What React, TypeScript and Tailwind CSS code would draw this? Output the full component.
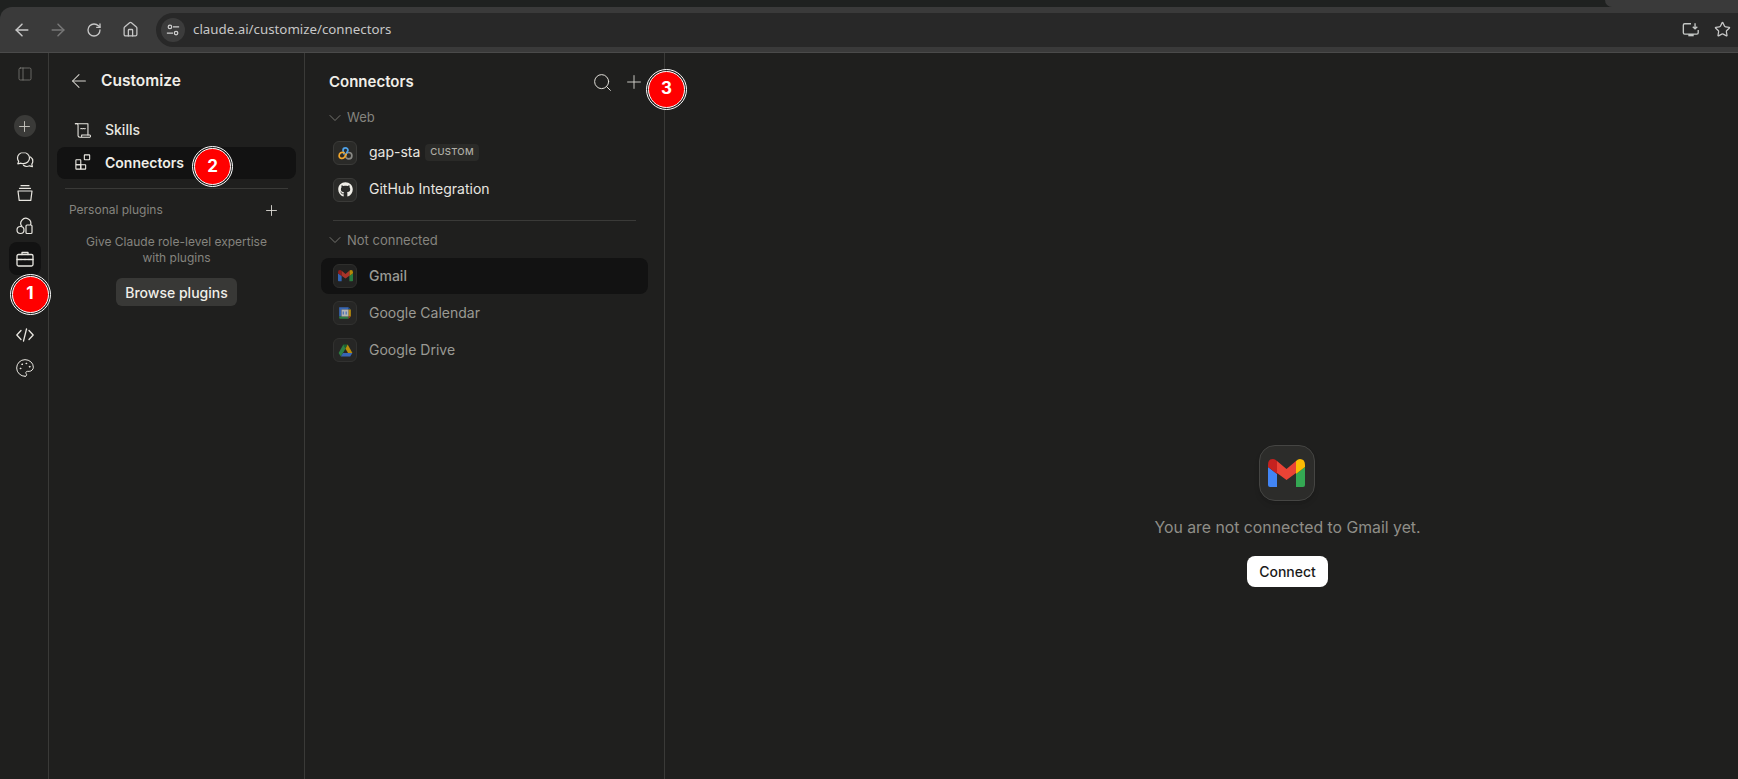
import { ArrowLeft, ArrowRight, ChevronDown, Home, Palette, PanelLeft, Plus, RotateCw, Search, Star } from "lucide-react";
import { FaGithub } from "react-icons/fa";
import type { ReactNode } from "react";

const appFont = "font-['Inter','Noto_Sans',sans-serif]";

function GmailIcon({ width }: { width: number }) {
  return (
    <svg width={width} height={(width * 28) / 37} viewBox="0 0 37 28" fill="none">
      <path d="M0 8L9 15V28H2Q0 28 0 26Z" fill="#4285f4" />
      <path d="M37 8L28 15V28H35Q37 28 37 26Z" fill="#34a853" />
      <path d="M0 6Q0 0 5 0Q7 0 9 2V15L0 8Z" fill="#c5221f" />
      <path d="M37 6Q37 0 32 0Q30 0 28 2V15L37 8Z" fill="#fbbc04" />
      <path d="M9 2L18.500 10L28 2V14L18.500 21L9 14Z" fill="#ea4335" />
    </svg>
  );
}

function CalendarIcon() {
  return (
    <svg width="14" height="14" viewBox="0 0 24 24">
      <path d="M2 2H18V6H6V18H2Z" fill="#4285f4" />
      <path d="M18 2L22 6H18Z" fill="#1967d2" />
      <path d="M18 6H22V18H18Z" fill="#fbbc04" />
      <path d="M2 18H18V22H4C3 22 2 21 2 20Z" fill="#34a853" />
      <path d="M18 18H22L18 22Z" fill="#ea4335" />
      <rect x="6" y="6" width="12" height="12" fill="#f4f4f4" />
      <path d="M9 9.500V14.500M14 9.500V14.500" stroke="#4285f4" strokeWidth="1.800" />
    </svg>
  );
}

function DriveIcon() {
  return (
    <svg width="15" height="15" viewBox="0 0 24 24">
      <path d="M8.500 2.500H15.500L12 9Z" fill="#188038" />
      <path d="M8.500 2.500L1 16L4.500 21.500L12 9Z" fill="#34a853" />
      <path d="M15.500 2.500L23 16H16L12 9Z" fill="#fbbc04" />
      <path d="M8 16H23L19.500 21.500H4.500Z" fill="#4285f4" />
    </svg>
  );
}

function LinkIcon() {
  return (
    <svg width="17" height="17" viewBox="0 0 24 24" fill="none" strokeWidth="2.400">
      <circle cx="16.500" cy="16.500" r="4.500" stroke="#8a8a86" />
      <path d="M10 14L8.500 9A3.500 3.500 0 1 1 15.500 9L13 14" stroke="#4ea1e8" strokeLinecap="round" />
      <path d="M10 12.500C6.500 10.500 3 13 3 16.500C3 20.500 8.500 22 11 18L13 14.500" stroke="#f0a62e" strokeLinecap="round" />
    </svg>
  );
}

function ChatsIcon() {
  return (
    <svg width="20" height="20" viewBox="0 0 20 20" fill="none" stroke="currentColor" strokeWidth="1.200" strokeLinecap="round" strokeLinejoin="round">
      <path d="M8.500 2.500C5 2.500 2.500 5 2.500 8C2.500 9.300 3 10.500 3.700 11.400L2.800 13.800L6 13.200C6.800 13.500 7.600 13.700 8.500 13.700C11.800 13.700 14.500 11.200 14.500 8C14.500 5 11.800 2.500 8.500 2.500Z" />
      <path d="M15.500 7C17 8 17.800 9.500 17.800 11.200C17.800 12.300 17.400 13.300 16.800 14.200L17.400 16.600L14.500 15.800C12.500 16.800 10 16.500 8.500 15.200" />
    </svg>
  );
}

function StackIcon() {
  return (
    <svg width="20" height="20" viewBox="0 0 20 20" fill="none" stroke="currentColor" strokeWidth="1.200" strokeLinecap="round" strokeLinejoin="round">
      <path d="M6 2.700H14" />
      <path d="M4.500 5.300H15.500" />
      <path d="M3 8H17L15.800 17.300H4.200Z" />
    </svg>
  );
}

function ShapesIcon() {
  return (
    <svg width="20" height="20" viewBox="0 0 20 20" fill="none" stroke="currentColor" strokeWidth="1.200" strokeLinejoin="round">
      <circle cx="5.500" cy="14" r="3.500" />
      <rect x="11" y="9" width="6" height="8.500" rx="1" />
      <path d="M7 10.500A5 5 0 1 1 15.500 9" />
    </svg>
  );
}

function BriefcaseIcon() {
  return (
    <svg width="20" height="20" viewBox="0 0 20 20" fill="none" stroke="currentColor" strokeWidth="1.300" strokeLinecap="round" strokeLinejoin="round">
      <rect x="2" y="5.500" width="16" height="11.500" rx="1.500" />
      <path d="M7 5.500V3.500H13V5.500" />
      <path d="M2 10.500H7.500M12.500 10.500H18M8.500 10.500H11.500" />
    </svg>
  );
}

function CodeIcon() {
  return (
    <svg width="20" height="20" viewBox="0 0 20 20" fill="none" stroke="currentColor" strokeWidth="1.300" strokeLinecap="round" strokeLinejoin="round">
      <path d="M6 5.500L1.800 10L6 14.500" />
      <path d="M14 5.500L18.200 10L14 14.500" />
      <path d="M11.500 4L8.500 16" />
    </svg>
  );
}

function ScrollIcon() {
  return (
    <svg width="18" height="18" viewBox="0 0 20 20" fill="none" stroke="currentColor" strokeWidth="1.200" strokeLinecap="round" strokeLinejoin="round">
      <path d="M1.500 3C3.500 2.500 4.500 3 4.500 5V16.500C4.500 17.500 5.500 18 6.500 18H17.500C18.500 18 18.800 16.200 17.500 15.500H8.500V17" />
      <path d="M1.500 3H15.500V15.500" />
      <path d="M7.500 8.500C8.500 7.800 9 9.200 10 8.500C11 7.800 11.500 9.200 12.500 8.500" />
    </svg>
  );
}

function BlocksIcon() {
  return (
    <svg width="16" height="16" viewBox="0 0 18 18" fill="none" stroke="currentColor" strokeWidth="1.200">
      <rect x="1" y="6.500" width="5.500" height="5.500" rx="0.500" />
      <rect x="1" y="12" width="5.500" height="5" rx="0.500" />
      <rect x="6.500" y="12" width="5.500" height="5" rx="0.500" />
      <rect x="10.500" y="1" width="6" height="5.500" rx="0.500" />
    </svg>
  );
}

function InstallIcon() {
  return (
    <svg width="18" height="18" viewBox="0 0 20 20" fill="none" stroke="#c4c7c5" strokeWidth="1.500">
      <path d="M10 3H3C2 3 1.500 3.500 1.500 4.500V13C1.500 14 2 14.500 3 14.500H16.500C17.500 14.500 18 14 18 13V10" />
      <rect x="7" y="14.500" width="6" height="2.500" fill="#c4c7c5" stroke="none" />
      <path d="M14.500 2.500V8.500M12 6.300L14.500 8.800L17 6.300" />
    </svg>
  );
}

// red numbered marker laid over the screenshot
function Marker({ n, className }: { n: number; className: string }) {
  return (
    <div className={`absolute flex h-[41px] w-[41px] items-center justify-center rounded-full border border-white bg-[#1f1f1e] ${className}`}>
      <div className="flex h-[37px] w-[37px] items-center justify-center rounded-full border border-white bg-[#ff0000] text-[17px] font-bold text-white">{n}</div>
    </div>
  );
}

function RailButton({ children, active }: { children: ReactNode; active?: boolean }) {
  return (
    <div className={`flex h-[33px] w-8 items-center justify-center rounded-lg text-[#e8e6e0] ${active ? "bg-[#121212]" : ""}`}>{children}</div>
  );
}

function ConnectorRow({ icon, name, badge, dim, active }: { icon: ReactNode; name: string; badge?: string; dim?: boolean; active?: boolean }) {
  return (
    <div className={`flex h-[36px] items-center gap-3 rounded-lg px-3 ${active ? "bg-[#121212]" : ""}`}>
      <div className={`flex h-6 w-6 items-center justify-center rounded-md border border-[#3a3a38] bg-[#2a2a28] ${dim ? "opacity-70" : ""}`}>{icon}</div>
      <span className={`text-[14px] leading-[18px] pb-px ${dim ? "text-[#9a9a94]" : "text-[#e8e6e0]"} ${active ? "font-medium" : ""}`}>{name}</span>
      {badge && <span className="-ml-[7px] rounded bg-[#2a2a28] px-[5px] py-[1px] text-[9.500px] font-medium tracking-wide text-[#b0aea6]">{badge}</span>}
    </div>
  );
}

function SectionLabel({ label }: { label: string }) {
  return (
    <div className="flex items-center gap-1 pl-[23px] text-[13px] text-[#85847e]">
      <ChevronDown size={20} strokeWidth={1} className="-m-[3px]" />
      <span className="ml-px">{label}</span>
    </div>
  );
}

export default function App() {
  return (
    <div className={`relative flex h-[779px] w-[1738px] flex-col overflow-hidden bg-[#1f2120] ${appFont}`}>
      {/* browser chrome */}
      <div className="flex h-[7px] justify-end">
        <div className="w-[133px] rounded-bl-lg bg-[#3a3a3a]" />
      </div>
      <div className="flex h-[46px] items-center rounded-tl-xl border-b border-[#4a4a4a] bg-[#3a3a3a] pl-[4px] font-['Noto_Sans',sans-serif] text-[#c7c7c7]">
        <div className="flex w-[152px] items-center">
          <div className="flex w-[36px] justify-center"><ArrowLeft size={20} strokeWidth={1.800} /></div>
          <div className="flex w-[36px] justify-center text-[#777]"><ArrowRight size={20} strokeWidth={1.800} /></div>
          <div className="flex w-[36px] justify-center"><RotateCw size={16} strokeWidth={2} /></div>
          <div className="flex w-[36px] justify-center"><Home size={17} strokeWidth={1.800} /></div>
        </div>
        <div className="flex h-[34px] flex-1 items-center rounded-l-full rounded-r-[10px] bg-[#282828] pl-[5px] pr-[7px]">
          <div className="flex h-6 w-6 items-center justify-center rounded-full bg-[#3c3c3c]">
            <svg width="14" height="14" viewBox="0 0 16 16" fill="none" stroke="#d0d0d0" strokeWidth="1.400">
              <circle cx="4.500" cy="4.500" r="2" />
              <path d="M8 4.500H15M1 11.500H8" />
              <circle cx="11.500" cy="11.500" r="2" />
            </svg>
          </div>
          <span className="ml-[8px] flex-1 text-[13.300px] text-[#c7c7c7]">claude.ai/customize/connectors</span>
          <div className="mr-[14px]"><InstallIcon /></div>
          <Star size={17} strokeWidth={1.800} />
        </div>
      </div>

      <div className="flex flex-1 bg-[#1f1f1e]">
        {/* icon rail */}
        <div className="flex w-[49px] flex-col items-center border-r border-[#3a3a38] pl-[1px] pt-[13px]">
          <PanelLeft size={16} strokeWidth={1.100} className="text-[#85847e]" />
          <div className="mt-[33px] flex h-[22px] w-[22px] items-center justify-center rounded-full bg-[#3a3a38] text-[#c8c6c0]">
            <Plus size={17} strokeWidth={1.300} />
          </div>
          <div className="mt-[6px] flex flex-col items-center">
            <RailButton><ChatsIcon /></RailButton>
            <RailButton><StackIcon /></RailButton>
            <RailButton><ShapesIcon /></RailButton>
            <RailButton active><BriefcaseIcon /></RailButton>
            <div className="h-[43px]" />
            <RailButton><CodeIcon /></RailButton>
            <RailButton><Palette size={20} strokeWidth={1.200} /></RailButton>
          </div>
        </div>

        {/* customize panel */}
        <div className="flex w-[256px] flex-col border-r border-[#3a3a38] px-2 pt-[16px]">
          <div className="flex h-6 items-center gap-[11px] pl-[11px]">
            <ArrowLeft size={22} strokeWidth={1.100} className="text-[#d8d6d0]" />
            <span className="text-[15.500px] font-semibold text-[#f0eee8]">Customize</span>
          </div>
          <div className="mt-[19px] flex h-[35px] items-center gap-[13px] pl-[17px] text-[14px] font-medium text-[#e8e6e0]">
            <ScrollIcon />
            <span>Skills</span>
          </div>
          <div className="flex h-[32px] items-center gap-[14px] rounded-lg bg-[#121212] pb-[2px] pl-[18px] text-[14px] font-semibold text-[#f0eee8]">
            <BlocksIcon />
            <span>Connectors</span>
          </div>
          <div className="mx-2 mt-[9px] border-t border-[#3a3a38]" />
          <div className="mt-[11px] flex h-[20px] items-center justify-between pl-3 pr-[16px] text-[12px] text-[#85847e]">
            <span>Personal plugins</span>
            <Plus size={17} strokeWidth={1.200} className="text-[#e8e6e0]" />
          </div>
          <p className="mt-[14px] text-center text-[12px] leading-[15.500px] text-[#85847e]">Give Claude role-level expertise<br />with plugins</p>
          <button className="mx-auto mt-[13px] h-[28px] w-[121px] rounded-md bg-[#383836] text-[14px] font-medium text-[#f0eee8]">Browse plugins</button>
        </div>

        {/* connector list */}
        <div className="flex w-[360px] flex-col border-r border-[#3a3a38] pt-[17px]">
          <div className="flex h-6 items-center pl-[24px] pr-[19px]">
            <span className="flex-1 text-[15px] font-semibold text-[#f0eee8]">Connectors</span>
            <Search size={21} strokeWidth={1.100} className="mr-[10px] text-[#e8e6e0]" />
            <Plus size={22} strokeWidth={1} className="text-[#d8d6d0]" />
          </div>
          <div className="mt-[14px]"><SectionLabel label="Web" /></div>
          <div className="mx-4 mt-[7px] flex flex-col gap-px">
            <ConnectorRow icon={<LinkIcon />} name="gap-sta" badge="CUSTOM" />
            <ConnectorRow icon={<FaGithub size={15} color="#f0eee8" />} name="GitHub Integration" />
          </div>
          <div className="mx-[28px] mt-[12px] border-t border-[#3a3a38]" />
          <div className="mt-[10px]"><SectionLabel label="Not connected" /></div>
          <div className="mx-4 mt-[8px] flex flex-col gap-px">
            <ConnectorRow active dim icon={<GmailIcon width={15} />} name="Gmail" />
            <ConnectorRow dim icon={<CalendarIcon />} name="Google Calendar" />
            <ConnectorRow dim icon={<DriveIcon />} name="Google Drive" />
          </div>
        </div>

        {/* empty state */}
        <div className="flex flex-1 flex-col items-center pl-[172px] pt-[392px]">
          <div className="-ml-[2px] flex h-14 w-14 items-center justify-center rounded-2xl border border-[#454543] bg-[#2c2c2a] shadow-md">
            <GmailIcon width={37} />
          </div>
          <p className="mt-[16px] text-[15.800px] leading-[22px] text-[#8f8e88]">You are not connected to Gmail yet.</p>
          <button className="mt-[17px] h-[31px] w-[81px] rounded-lg bg-white text-[14px] font-medium text-[#1a1a1a]">Connect</button>
        </div>
      </div>

      <Marker n={1} className="left-[9.500px] top-[273.500px]" />
      <Marker n={2} className="left-[192px] top-[146px]" />
      <Marker n={3} className="left-[646px] top-[68.500px]" />
    </div>
  );
}
